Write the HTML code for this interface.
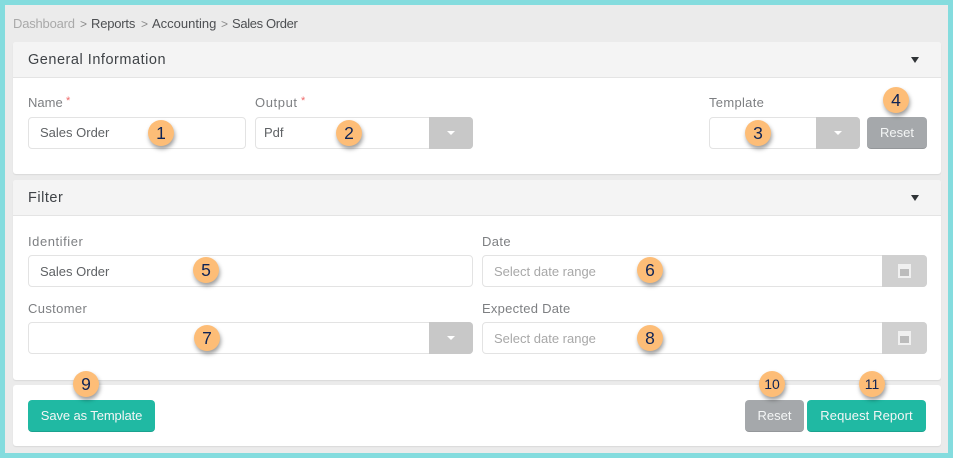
<!DOCTYPE html>
<html><head><meta charset="utf-8">
<style>
html,body{margin:0;padding:0}
body{width:953px;height:458px;position:relative;overflow:hidden;background:#84dcde;font-family:"Liberation Sans",sans-serif;font-size:13px;color:#58595b}
div,span{position:absolute;box-sizing:border-box}
.t{white-space:nowrap;line-height:16px}
.bg{left:5px;top:5px;width:943px;height:448px;background:#ebebeb}
.panel{left:13px;width:928px;background:#fff;border-radius:3px;box-shadow:0 1px 1px rgba(0,0,0,.08)}
.head{left:0;top:0;width:928px;height:36px;background:#f4f4f4;border-bottom:1px solid #e4e4e4;border-radius:3px 3px 0 0}
.title{font-size:14.5px;color:#3f4347;letter-spacing:.52px}
.car{width:0;height:0;border-left:4.5px solid transparent;border-right:4.5px solid transparent;border-top:6px solid #2f3336}
.lab{color:#7d7f82;font-size:13px}
.req{color:#ef6a6a;font-size:11px}
.inp{height:32px;background:#fff;border:1px solid #e3e3e3;border-radius:4px}
.add{height:32px;background:#c8c8c8;border-radius:0 4px 4px 0}
.add i{position:absolute;left:18px;top:14px;width:0;height:0;border-left:4px solid transparent;border-right:4px solid transparent;border-top:4px solid #fff}
.val{color:#5f6265;font-size:13px}
.ph{color:#a8a8a8;font-size:13px}
.btn{height:32px;border-radius:4px;color:#f4f6f6;text-align:center;line-height:31px;font-size:13px;white-space:nowrap}
.green{background:#20b9a3;border-bottom:1px solid #1ba28f}
.gray{background:#a5a8ab;border-bottom:1px solid #94979a}
.num{width:26px;height:26px;border-radius:50%;background:#fdbd77;color:#0f2456;text-align:center;line-height:27px;font-size:17.5px;box-shadow:1px 3px 4px rgba(0,0,0,.38)}
.num.s{font-size:14px}
.cal{left:16px;top:9px;width:13px;height:14px;background:#f0f0f0}
.cal b{position:absolute;left:2px;top:5px;width:9px;height:7px;background:#bcbcbc}
</style></head>
<body>
<div class="bg"></div>

<span class="t" style="left:13px;top:16px;color:#a9a9a9;letter-spacing:-.2px">Dashboard</span>
<span class="t" style="left:80px;top:16px;color:#8a8a8a;font-size:12px">&gt;</span>
<span class="t" style="left:91px;top:16px;color:#4d4f52;letter-spacing:-.2px">Reports</span>
<span class="t" style="left:141px;top:16px;color:#8a8a8a;font-size:12px">&gt;</span>
<span class="t" style="left:152px;top:16px;color:#4d4f52">Accounting</span>
<span class="t" style="left:221px;top:16px;color:#8a8a8a;font-size:12px">&gt;</span>
<span class="t" style="left:232px;top:16px;color:#4d4f52;letter-spacing:-.35px">Sales Order</span>

<div class="panel" style="top:42px;height:132px">
  <div class="head"></div>
  <span class="t title" style="left:15px;top:10px">General Information</span>
  <div class="car" style="left:898px;top:15px"></div>
</div>
<span class="t lab" style="left:28px;top:95px">Name</span><span class="t req" style="left:66px;top:93px">*</span>
<div class="inp" style="left:28px;top:117px;width:218px"></div>
<span class="t val" style="left:40px;top:125px">Sales Order</span>

<span class="t lab" style="left:255px;top:95px;letter-spacing:.6px">Output</span><span class="t req" style="left:301px;top:93px">*</span>
<div class="inp" style="left:255px;top:117px;width:218px"></div>
<span class="t val" style="left:264px;top:125px">Pdf</span>
<div class="add" style="left:429px;top:117px;width:44px"><i></i></div>

<span class="t lab" style="left:709px;top:95px;letter-spacing:.3px">Template</span>
<div class="inp" style="left:709px;top:117px;width:151px"></div>
<div class="add" style="left:816px;top:117px;width:44px"><i></i></div>
<div class="btn gray" style="left:867px;top:117px;width:60px">Reset</div>

<div class="panel" style="top:180px;height:200px">
  <div class="head"></div>
  <span class="t title" style="left:15px;top:10px">Filter</span>
  <div class="car" style="left:898px;top:15px"></div>
</div>
<span class="t lab" style="left:28px;top:234px;letter-spacing:.55px">Identifier</span>
<div class="inp" style="left:28px;top:255px;width:445px"></div>
<span class="t val" style="left:40px;top:264px">Sales Order</span>

<span class="t lab" style="left:482px;top:234px;letter-spacing:.4px">Date</span>
<div class="inp" style="left:482px;top:255px;width:445px"></div>
<span class="t ph" style="left:494px;top:264px">Select date range</span>
<div class="add" style="left:882px;top:255px;width:45px;background:#d0d0d0"><div class="cal"><b></b></div></div>

<span class="t lab" style="left:28px;top:301px;letter-spacing:.35px">Customer</span>
<div class="inp" style="left:28px;top:322px;width:445px"></div>
<div class="add" style="left:429px;top:322px;width:44px"><i></i></div>

<span class="t lab" style="left:482px;top:301px;letter-spacing:.25px">Expected Date</span>
<div class="inp" style="left:482px;top:322px;width:445px"></div>
<span class="t ph" style="left:494px;top:331px">Select date range</span>
<div class="add" style="left:882px;top:322px;width:45px;background:#d0d0d0"><div class="cal"><b></b></div></div>

<div class="panel" style="top:385px;height:61px"></div>
<div class="btn green" style="left:28px;top:400px;width:127px;letter-spacing:-.1px">Save as Template</div>
<div class="btn gray" style="left:745px;top:400px;width:59px">Reset</div>
<div class="btn green" style="left:807px;top:400px;width:119px;letter-spacing:.1px">Request Report</div>

<div class="num" style="left:148px;top:120px">1</div>
<div class="num" style="left:336px;top:120px">2</div>
<div class="num" style="left:745px;top:120px">3</div>
<div class="num" style="left:883px;top:87px">4</div>
<div class="num" style="left:193px;top:257px">5</div>
<div class="num" style="left:637px;top:257px">6</div>
<div class="num" style="left:194px;top:325px">7</div>
<div class="num" style="left:637px;top:325px">8</div>
<div class="num" style="left:73px;top:371px">9</div>
<div class="num s" style="left:759px;top:371px">10</div>
<div class="num s" style="left:859px;top:371px">11</div>
</body></html>
